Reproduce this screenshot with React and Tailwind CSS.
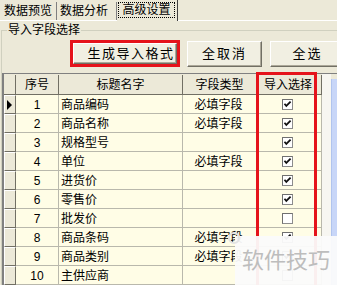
import React from 'react';

const rows = [
  { no: 1, name: '商品编码', type: '必填字段', on: true },
  { no: 2, name: '商品名称', type: '必填字段', on: true },
  { no: 3, name: '规格型号', type: '', on: true },
  { no: 4, name: '单位', type: '必填字段', on: true },
  { no: 5, name: '进货价', type: '', on: true },
  { no: 6, name: '零售价', type: '', on: true },
  { no: 7, name: '批发价', type: '', on: false },
  { no: 8, name: '商品条码', type: '必填字段', on: true },
  { no: 9, name: '商品类别', type: '必填字段', on: true },
  { no: 10, name: '主供应商', type: '', on: false },
];

const CheckBox = ({ on }) => (
  <svg width="11" height="11" viewBox="0 0 11 11">
    <rect x="0.5" y="0.5" width="10" height="10" fill="#fff" stroke="#8c8c8c" />
    <path d="M0.5 10.5V0.5H10.5" fill="none" stroke="#6f6f6f" />
    {on && <path d="M2.5 4.8L4.3 7L8.6 2.6" fill="none" stroke="#111" strokeWidth="1.8" />}
  </svg>
);

const Btn = ({ children, className = '' }) => (
  <div className={`flex items-center justify-center bg-[#F1EFE2] border border-t-white border-l-white border-r-[#716F64] border-b-[#716F64] shadow-[inset_-1px_-1px_0_#ACA899] ${className}`}>
    {children}
  </div>
);

const App = () => {
  return (
    <div className="relative w-[337px] h-[285px] overflow-hidden bg-[#ECE9D8] text-[12px] text-black [font-family:'Liberation_Sans','Noto_Sans_CJK_SC',sans-serif]">
      {/* tab strip */}
      <div className="h-[21px] flex items-end pl-[2px] border-b border-white">
        <div className="h-[18px] w-[55px] pl-[2px] pt-[1px] flex items-center leading-[13px] border-r border-[#808080]">数据预览</div>
        <div className="h-[18px] w-[60px] pl-[3px] pt-[1px] flex items-center leading-[13px] border-r border-[#808080]">数据分析</div>
        <div className="h-[21px] w-[61px] pt-[2px] pl-[1px] border-r border-[#404040] -mb-[1px] bg-[#ECE9D8]">
          <div className="h-[16px] w-[57px] flex items-center justify-center leading-[13px] border border-dotted border-black">高级设置</div>
        </div>
      </div>

      {/* group box */}
      <fieldset className="mt-[3px] ml-[1px] w-[420px] h-[300px] border border-[#D0D0BF]">
        <legend className="ml-[5px] px-[1px] leading-[13px]">导入字段选择</legend>

        <div className="flex items-start mt-[3px]">
          <div className="ml-[68px] w-[110px] h-[27px] border-[3px] border-[#E5131B]">
            <Btn className="h-full w-full pl-[12px] text-[13px] tracking-[1.5px]">生成导入格式</Btn>
          </div>
          <Btn className="ml-[7px] mt-[1px] w-[75px] h-[26px] text-[13px] tracking-[2px]">全取消</Btn>
          <Btn className="ml-[8px] mt-[1px] w-[75px] h-[26px] text-[13px] tracking-[2px]">全选</Btn>
        </div>

        {/* grid */}
        <div className="mt-[6px] flex border-t border-l-2 border-t-[#808080] border-l-[#808080]">
          <div className="w-[318px] flex flex-col">
            <div className="flex h-[21px] pt-[1px] bg-[#ECE9D8] border-b border-[#716F64]">
              <div className="w-[12px] border-r border-[#716F64]" />
              <div className="w-[43px] flex items-center justify-center border-r border-[#716F64]">序号</div>
              <div className="w-[124px] flex items-center justify-center border-r border-[#716F64]">标题名字</div>
              <div className="w-[74px] flex items-center justify-center border-r border-[#716F64]">字段类型</div>
              <div className="w-[65px] flex items-center justify-center pr-[2px] border-r border-[#716F64]">导入选择</div>
            </div>
            {rows.map((r) => (
              <div key={r.no} className="flex h-[19px]">
                <div className="w-[12px] flex items-center pl-[2px] bg-[#ECE9D8] border-t border-l border-t-white border-l-white border-r border-b border-r-[#716F64] border-b-[#716F64]">
                  {r.no === 1 && (
                    <svg width="6" height="10" viewBox="0 0 6 10">
                      <path d="M0 0L5 5L0 10Z" fill="#000" />
                    </svg>
                  )}
                </div>
                <div className="w-[43px] flex items-center justify-center pt-[1px] bg-[#FFFDE6] border-r border-b border-[#B9B8AC]">{r.no}</div>
                <div className="w-[124px] flex items-center pl-[2px] pt-[1px] bg-[#FFFDE6] border-r border-b border-[#B9B8AC]">{r.name}</div>
                <div className="w-[74px] flex items-center justify-center pr-[2px] pt-[1px] bg-[#FFFDE6] border-r border-b border-[#B9B8AC]">{r.type}</div>
                <div className="w-[65px] flex items-center justify-center pr-[4px] pt-[1px] bg-[#FFFDE6] border-r border-b border-[#B9B8AC]">
                  <CheckBox on={r.on} />
                </div>
              </div>
            ))}
          </div>
          <div className="w-[9px] bg-[#F7F6F1]" />
          <div className="w-[8px] mt-[5px] bg-[#C8D6F8] border-l border-[#B0C4EE]" />
        </div>
      </fieldset>

      {/* red annotation around the import column */}
      <div className="absolute left-[256px] top-[72px] w-[61px] h-[230px] border-[3px] border-[#E5131B]" />

      {/* watermark */}
      <div className="absolute left-[235px] top-[236px] w-[102px] h-[49px] bg-[#FBFBFB]/95 flex items-start pl-[7px] pt-[10px]">
        <span className="text-[22px] leading-[24px] text-[#BDBDBD] [font-family:'Noto_Sans_CJK_SC',sans-serif]">软件技巧</span>
      </div>
      <svg className="absolute left-[226px] top-[230px]" width="16" height="16" viewBox="0 0 16 16">
        <circle cx="8" cy="8" r="5" fill="none" stroke="#e3e3e3" strokeWidth="2" />
      </svg>
    </div>
  );
};

export default App;
